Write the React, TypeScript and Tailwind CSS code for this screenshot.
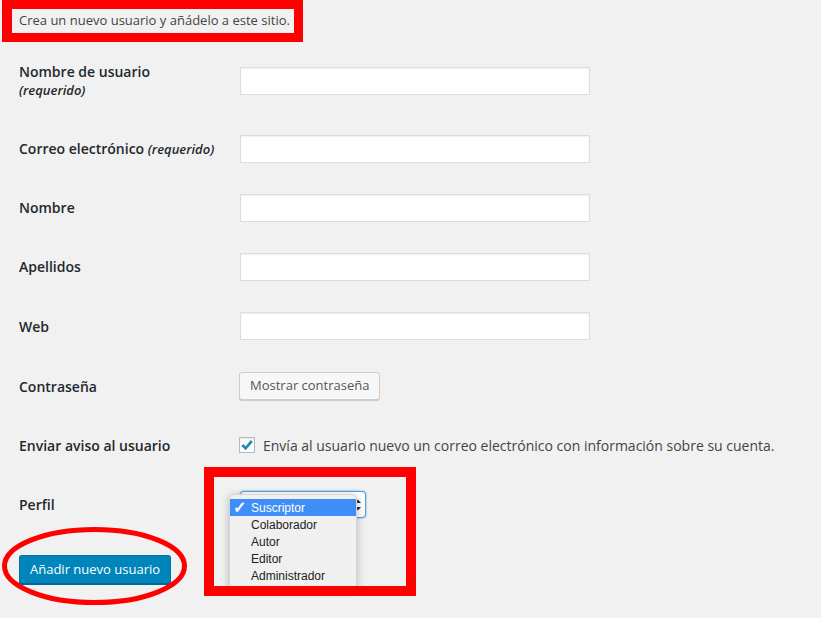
import React from "react";

const FONT = { fontFamily: '"Open Sans", "Liberation Sans", sans-serif' };

function TextInput() {
  return (
    <input
      type="text"
      className="w-[350px] h-[28px] bg-white border border-[#ddd] shadow-[inset_0_1px_2px_rgba(0,0,0,0.07)] outline-none"
    />
  );
}

function Row({
  h,
  label,
  children,
}: {
  h: string;
  label: React.ReactNode;
  children: React.ReactNode;
}) {
  return (
    <div className={`flex items-center ${h}`}>
      <div className="w-[221px] shrink-0 text-[14px] font-semibold text-[#23282d] leading-[19px]">
        {label}
      </div>
      {children}
    </div>
  );
}

const ROLES = ["Suscriptor", "Colaborador", "Autor", "Editor", "Administrador"];

export default function App() {
  return (
    <div className="relative min-h-screen bg-[#f1f1f1] overflow-hidden" style={FONT}>
      {/* notice with red annotation frame */}
      <div className="ml-[2px] w-[301px] h-[42px] border-[9px] border-l-[10px] border-[#ff0000] flex items-center pl-[7px]">
        <span className="text-[13px] text-[#444]">Crea un nuevo usuario y añádelo a este sitio.</span>
      </div>

      <div className="pl-[19px]">
        <Row
          h="h-[77px]"
          label={
            <>
              <div>Nombre de usuario</div>
              <div className="text-[13px] italic font-semibold">(requerido)</div>
            </>
          }
        >
          <TextInput />
        </Row>
        <Row
          h="h-[59px]"
          label={
            <>
              Correo electrónico <span className="text-[13px] italic">(requerido)</span>
            </>
          }
        >
          <TextInput />
        </Row>
        <Row h="h-[59px]" label="Nombre">
          <TextInput />
        </Row>
        <Row h="h-[59px]" label="Apellidos">
          <TextInput />
        </Row>
        <Row h="h-[60px]" label="Web">
          <TextInput />
        </Row>
        <Row h="h-[60px]" label="Contraseña">
          <button className="-ml-px h-[28px] px-[10px] bg-[#f7f7f7] border border-[#ccc] rounded-[3px] shadow-[0_1px_0_#ccc] text-[13px] text-[#555]">
            Mostrar contraseña
          </button>
        </Row>
        <Row h="h-[58px]" label="Enviar aviso al usuario">
          <div className="-ml-px flex items-center gap-[8px]">
            <span className="w-[16px] h-[16px] bg-white border border-[#b4b9be] flex items-center justify-center shadow-[inset_0_1px_2px_rgba(0,0,0,0.1)]">
              <svg width="12" height="12" viewBox="0 0 12 12">
                <path d="M1.3 6 L4.6 9.3 L10.8 2" fill="none" stroke="#1e8cbe" strokeWidth="2.8" />
              </svg>
            </span>
            <span className="text-[14px] text-[#444]">
              Envía al usuario nuevo un correo electrónico con información sobre su cuenta.
            </span>
          </div>
        </Row>
        <Row h="h-[61px]" label="Perfil">
          <div className="w-[126px] h-[27px] bg-white border border-[#5b9dd9] rounded-[4px] shadow-[0_0_2px_rgba(30,140,190,0.8)] flex items-center justify-end pr-[3px]">
            <svg width="8" height="14" viewBox="0 0 8 14">
              <path d="M1 5 L4 1.5 L7 5 Z M1 9 L4 12.5 L7 9 Z" fill="#333" />
            </svg>
          </div>
        </Row>
        <div className="flex items-center h-[69px]">
          <button className="h-[29px] px-[10px] bg-[#0085ba] border border-[#0073aa] border-b-[#006799] rounded-[3px] shadow-[0_1px_0_#006799] text-[13px] text-white">
            Añadir nuevo usuario
          </button>
        </div>
      </div>

      {/* open select menu */}
      <div
        className="absolute left-[229px] top-[494px] w-[128px] bg-[#f0f0f0] rounded-[5px] shadow-[0_2px_8px_rgba(0,0,0,0.25)] border border-[#d6d6d6] py-[4px]"
        style={{ fontFamily: '"Liberation Sans", Arial, sans-serif' }}
      >
        {ROLES.map((r, i) => (
          <div
            key={r}
            className={`h-[17px] flex items-center text-[12px] ${i === 0 ? "bg-[#3f8ef7] text-white" : "text-[#222]"}`}
          >
            <span className="w-[21px] pl-[3px] text-[16px] font-bold leading-none">{i === 0 ? "✓" : ""}</span>
            {r}
          </div>
        ))}
      </div>

      {/* red annotation frame around select */}
      <div className="absolute left-[204px] top-[467px] w-[212px] h-[129px] border-[10px] border-[#ff0000]" />

      {/* red annotation ellipse around submit button */}
      <svg className="absolute left-0 top-[520px]" width="200" height="95" viewBox="0 0 200 95">
        <ellipse cx="94.5" cy="46" rx="90" ry="36.5" fill="none" stroke="#ff0000" strokeWidth="5" />
      </svg>
    </div>
  );
}
